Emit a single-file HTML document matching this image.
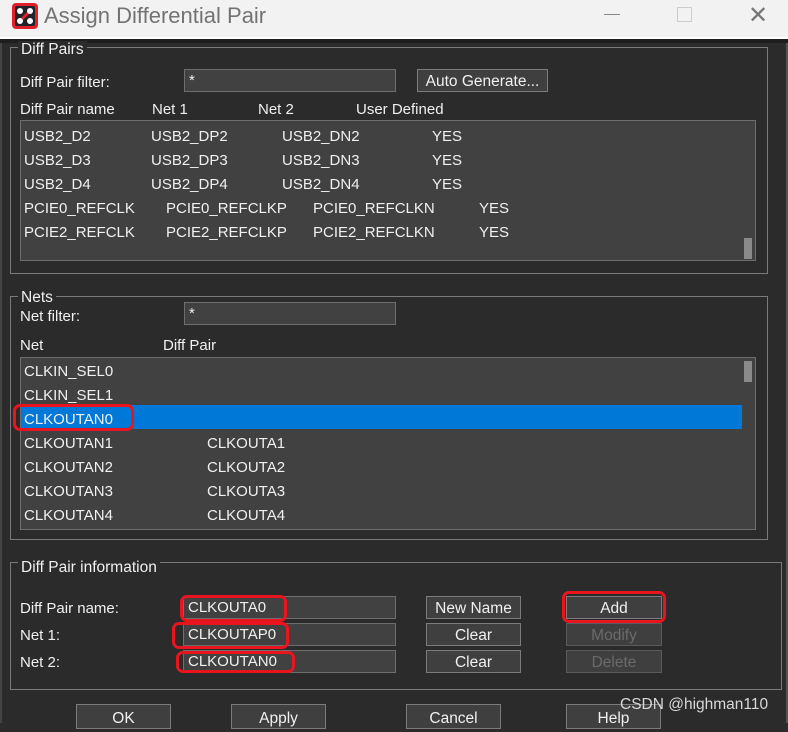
<!DOCTYPE html><html><head><style>
*{margin:0;padding:0;box-sizing:border-box}
body{width:788px;height:723px;background:#2b2b2b;font-family:"Liberation Sans",sans-serif;font-size:15px;color:#f0f0f0;position:relative;overflow:hidden}
.a{position:absolute;white-space:nowrap}
.t{margin-top:2px}
.grp{position:absolute;border:1px solid #7a7a7a}
.lg{position:absolute;background:#2b2b2b;padding:0 3px;font-size:15.5px;margin-top:1px}
.box{position:absolute;background:#414141;border:1px solid #6e6e6e}
.inp{position:absolute;background:#414141;border:1px solid #6e6e6e;padding-left:4px;line-height:22px}
.btn{position:absolute;background:#3f3f3f;border:1px solid #7c7c7c;text-align:center;line-height:23px;font-size:15.5px}
.dis{color:#6a6a6a;border-color:#5a5a5a}
.red{position:absolute;border:3px solid #e8141e;border-radius:7px}
</style></head><body>
<div class="a" style="left:0;top:0;width:788px;height:38px;background:#f2f2f2"></div>
<div class="a" style="left:0;top:37px;width:788px;height:2px;background:#fff"></div>
<svg class="a" style="left:12px;top:3px" width="26" height="26" viewBox="0 0 26 26"><rect x="0" y="0" width="26" height="26" rx="4" fill="#e0202a"/><rect x="3" y="3" width="20" height="20" rx="2" fill="#20242a"/><line x1="8" y1="18" x2="18" y2="8" stroke="#e0202a" stroke-width="3"/><circle cx="8" cy="8" r="3" fill="#fff"/><circle cx="18" cy="8" r="3" fill="#fff"/><circle cx="8" cy="18" r="3" fill="#fff"/><circle cx="18" cy="18" r="3" fill="#fff"/></svg>
<div class="a" style="left:44px;top:3px;font-size:22px;color:#737373">Assign Differential Pair</div>
<div class="a" style="left:604px;top:14px;width:16px;height:1px;background:#888"></div>
<div class="a" style="left:677px;top:7px;width:15px;height:15px;border:1px solid #ccc"></div>
<div class="a" style="left:748px;top:1px;font-size:24px;color:#777">✕</div>
<div class="a" style="left:0;top:39px;width:788px;height:4px;background:#1e1e1e"></div>
<div class="a" style="left:0;top:43px;width:2px;height:680px;background:#444"></div>
<div class="a" style="left:786px;top:43px;width:2px;height:680px;background:#555"></div>

<div class="grp" style="left:10px;top:47px;width:758px;height:227px"></div>
<div class="lg" style="left:18px;top:40px">Diff Pairs</div>
<div class="a t" style="left:20px;top:72px">Diff Pair filter:</div>
<div class="inp" style="left:184px;top:69px;width:212px;height:23px">*</div>
<div class="btn" style="left:417px;top:69px;width:131px;height:23px">Auto Generate...</div>
<div class="a t" style="left:20px;top:99px">Diff Pair name</div><div class="a t" style="left:152px;top:99px">Net 1</div><div class="a t" style="left:258px;top:99px">Net 2</div><div class="a t" style="left:356px;top:99px">User Defined</div>
<div class="box" style="left:20px;top:120px;width:736px;height:141px"></div>
<div class="a" style="left:744px;top:238px;width:8px;height:21px;background:#8a8a8a"></div>
<div class="a t" style="left:24px;top:123px;line-height:24px">USB2_D2<br>USB2_D3<br>USB2_D4<br>PCIE0_REFCLK<br>PCIE2_REFCLK</div>
<div class="a t" style="left:151px;top:123px;line-height:24px">USB2_DP2<br>USB2_DP3<br>USB2_DP4</div>
<div class="a t" style="left:282px;top:123px;line-height:24px">USB2_DN2<br>USB2_DN3<br>USB2_DN4</div>
<div class="a t" style="left:432px;top:123px;line-height:24px">YES<br>YES<br>YES</div>
<div class="a t" style="left:166px;top:195px;line-height:24px">PCIE0_REFCLKP<br>PCIE2_REFCLKP</div>
<div class="a t" style="left:313px;top:195px;line-height:24px">PCIE0_REFCLKN<br>PCIE2_REFCLKN</div>
<div class="a t" style="left:479px;top:195px;line-height:24px">YES<br>YES</div>

<div class="grp" style="left:10px;top:296px;width:758px;height:244px"></div>
<div class="lg" style="left:18px;top:288px">Nets</div>
<div class="a t" style="left:20px;top:306px">Net filter:</div>
<div class="inp" style="left:184px;top:302px;width:212px;height:23px">*</div>
<div class="a t" style="left:20px;top:335px">Net</div><div class="a t" style="left:163px;top:335px">Diff Pair</div>
<div class="box" style="left:20px;top:357px;width:736px;height:173px"></div>
<div class="a" style="left:744px;top:361px;width:8px;height:21px;background:#8a8a8a"></div>
<div class="a" style="left:21px;top:405px;width:721px;height:24px;background:#0078d7"></div>
<div class="a t" style="left:24px;top:358px;line-height:24px">CLKIN_SEL0<br>CLKIN_SEL1<br>CLKOUTAN0<br>CLKOUTAN1<br>CLKOUTAN2<br>CLKOUTAN3<br>CLKOUTAN4</div>
<div class="a t" style="left:207px;top:430px;line-height:24px">CLKOUTA1<br>CLKOUTA2<br>CLKOUTA3<br>CLKOUTA4</div>
<div class="red" style="left:13px;top:404px;width:121px;height:27px"></div>

<div class="grp" style="left:10px;top:562px;width:772px;height:128px"></div>
<div class="lg" style="left:18px;top:558px">Diff Pair information</div>
<div class="a t" style="left:20px;top:598px">Diff Pair name:</div>
<div class="a t" style="left:20px;top:625px">Net 1:</div>
<div class="a t" style="left:20px;top:652px">Net 2:</div>
<div class="inp" style="left:183px;top:596px;width:213px;height:23px">CLKOUTA0</div>
<div class="inp" style="left:183px;top:623px;width:213px;height:23px">CLKOUTAP0</div>
<div class="inp" style="left:183px;top:650px;width:213px;height:23px">CLKOUTAN0</div>
<div class="btn" style="left:426px;top:596px;width:95px;height:23px">New Name</div>
<div class="btn" style="left:426px;top:623px;width:95px;height:23px">Clear</div>
<div class="btn" style="left:426px;top:650px;width:95px;height:23px">Clear</div>
<div class="btn" style="left:566px;top:596px;width:96px;height:23px">Add</div>
<div class="btn dis" style="left:566px;top:623px;width:96px;height:23px">Modify</div>
<div class="btn dis" style="left:566px;top:650px;width:96px;height:23px">Delete</div>
<div class="red" style="left:180px;top:595px;width:107px;height:27px"></div>
<div class="red" style="left:172px;top:622px;width:117px;height:27px"></div>
<div class="red" style="left:176px;top:651px;width:119px;height:22px"></div>
<div class="red" style="left:562px;top:591px;width:104px;height:32px"></div>

<div class="btn" style="left:76px;top:704px;width:95px;height:25px;line-height:27px">OK</div>
<div class="btn" style="left:231px;top:704px;width:95px;height:25px;line-height:27px">Apply</div>
<div class="btn" style="left:406px;top:704px;width:95px;height:25px;line-height:27px">Cancel</div>
<div class="btn" style="left:566px;top:704px;width:95px;height:25px;line-height:27px">Help</div>
<div class="a" style="left:620px;top:696px;font-size:15.5px;color:#d8d8d8">CSDN @highman110</div>
</body></html>
